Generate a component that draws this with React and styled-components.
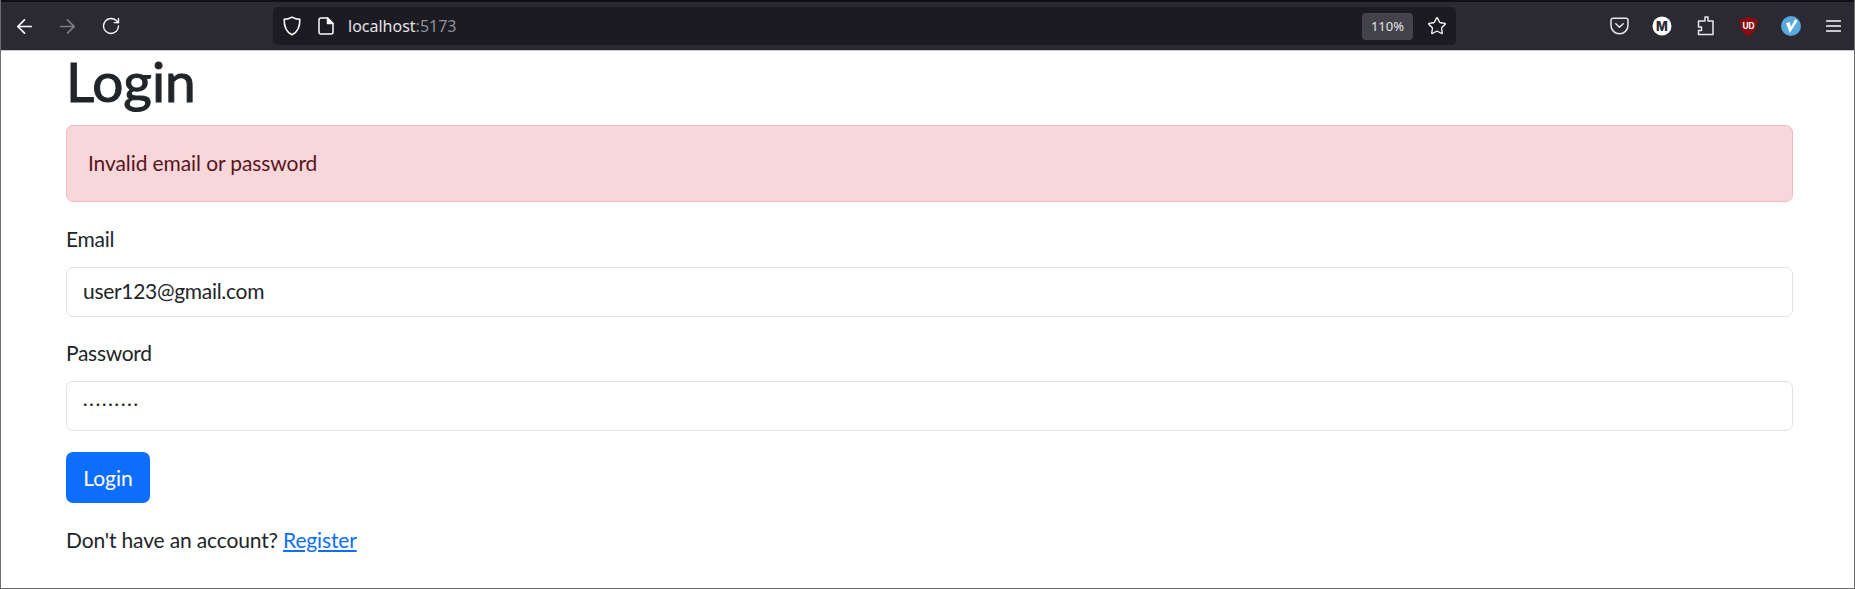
import styled, { createGlobalStyle } from "styled-components"
import { ArrowLeft, ArrowRight, RotateCw, Star } from "lucide-react"

const Global = createGlobalStyle`
  html, body { margin: 0; padding: 0; background: #fff; }
  body { font-family: "Lato", "Open Sans", sans-serif; overflow: hidden; }
  * { box-sizing: border-box; }
`

const Frame = styled.div`
  width: 1855px;
  height: 589px;
  border: 1px solid #6b6b6b;
  border-top: none;
  overflow: hidden;
`

const Toolbar = styled.div`
  height: 51px;
  background: #2b2a33;
  border-top: 2px solid #101014;
  border-bottom: 1px solid #c9c9cd;
  display: flex;
  align-items: center;
  padding: 0 9px 0 2px;
  color: #fbfbfe;
`

const NavButton = styled.div`
  width: 43px;
  height: 42px;
  display: flex;
  align-items: center;
  justify-content: center;
  opacity: ${p => (p.$dim ? 0.4 : 1)};
`

const UrlBar = styled.div`
  margin-left: 141px;
  width: 1183px;
  height: 38px;
  background: #1c1b22;
  border-radius: 5px;
  display: flex;
  align-items: center;
  padding: 0 9px 0 10px;
`

const UrlIcon = styled.div`
  width: 18px;
  height: 20px;
  margin-right: ${p => p.$gap}px;
  display: flex;
  align-items: center;
  justify-content: center;
`

const UrlText = styled.div`
  flex: 1;
  font-family: "Noto Sans", sans-serif;
  font-size: 16px;
  color: #e4e4e8;
  span { color: #8f8f9d; }
`

const ZoomBadge = styled.div`
  background: #44434c;
  border-radius: 4px;
  height: 27px;
  width: 51px;
  margin-right: 14px;
  font-family: "Noto Sans", sans-serif;
  font-size: 13px;
  color: #e4e4e8;
  display: flex;
  align-items: center;
  justify-content: center;
`

const Extensions = styled.div`
  margin-left: auto;
  display: flex;
  align-items: center;
  gap: 21px;
`

const ExtSlot = styled.div`
  width: 22px;
  height: 22px;
  display: flex;
  align-items: center;
  justify-content: center;
`

const Content = styled.div`
  padding: 0 61px 0 65px;
`

const Heading = styled.h1`
  margin: 0 0 14px;
  font-size: 55px;
  line-height: 60px;
  font-weight: 400;
  -webkit-text-stroke: 1px #212529;
  color: #212529;
`

const Alert = styled.div`
  height: 77px;
  background: #f8d7da;
  border: 1px solid #f5b9c0;
  border-radius: 7px;
  padding: 0 21px 2px;
  display: flex;
  align-items: center;
  font-size: 21px;
  letter-spacing: -0.1px;
  color: #58151c;
`

const Field = styled.div`
  margin-top: ${p => p.$top}px;
`

const Label = styled.label`
  display: block;
  font-size: 21px;
  line-height: 32px;
  letter-spacing: -0.3px;
  margin-bottom: 12px;
  color: #212529;
`

const Input = styled.div`
  height: 50px;
  border: 1.5px solid #dfe2e6;
  border-radius: 7px;
  padding: 0 16px 4px;
  display: flex;
  align-items: center;
  font-size: 21px;
  letter-spacing: -0.3px;
  color: #212529;
`

const PasswordDots = styled.span`
  font-size: 17px;
  letter-spacing: 1.9px;
  margin-top: -1px;
`

const SubmitButton = styled.button`
  display: block;
  margin-top: 21px;
  width: 84px;
  height: 51px;
  background: #0d6efd;
  border: none;
  border-radius: 7px;
  color: #fff;
  font-family: inherit;
  font-size: 21px;
`

const Footer = styled.p`
  margin: 21px 0 0;
  font-size: 21px;
  line-height: 32px;
  letter-spacing: -0.15px;
  color: #212529;
  a { color: #0d6efd; text-decoration: underline; }
`

const ShieldIcon = () => (
  <svg width="18" height="20" viewBox="0 0 18 20" fill="none" stroke="currentColor" strokeWidth="1.6" strokeLinejoin="round">
    <path d="M9 1.2 C11.5 2.8 14 3.4 16.8 3.4 C17 10 15 15.8 9 18.8 C3 15.8 1 10 1.2 3.4 C4 3.4 6.5 2.8 9 1.2 Z" />
  </svg>
)

const FileIcon = () => (
  <svg width="16" height="18" viewBox="0 0 16 18" fill="none" stroke="currentColor" strokeWidth="1.5" strokeLinejoin="round">
    <path d="M3 1 H9.5 L15 6.5 V15 A2 2 0 0 1 13 17 H3 A2 2 0 0 1 1 15 V3 A2 2 0 0 1 3 1 Z" />
    <path d="M9.5 1 V6.5 H15 Z" fill="currentColor" />
  </svg>
)

const PocketIcon = () => (
  <svg width="19" height="18" viewBox="0 0 19 18" fill="none" stroke="#e8e8ec" strokeWidth="1.5" strokeLinecap="round" strokeLinejoin="round">
    <path d="M3 1.2 H16 A2 2 0 0 1 18 3.2 V8.5 A8.5 8.3 0 0 1 1 8.5 V3.2 A2 2 0 0 1 3 1.2 Z" />
    <path d="M5.8 6.8 L9.5 10.2 L13.2 6.8" />
  </svg>
)

const AccountIcon = () => (
  <svg width="20" height="20" viewBox="0 0 20 20">
    <circle cx="10" cy="10" r="9.5" fill="#fff" />
    <text x="10" y="14.5" textAnchor="middle" fontSize="12.5" fontWeight="800" fontFamily="Inter, sans-serif" fill="#2b2a33">M</text>
  </svg>
)

const PuzzleIcon = () => (
  <svg width="17" height="20" viewBox="0 0 17 20" fill="none" stroke="#e8e8ec" strokeWidth="1.5" strokeLinejoin="round">
    <path d="M8 1 H11 V5 H16 V18.5 H1.5 V14.5 H4.5 V11 H1.5 V5 H8 Z" />
  </svg>
)

const UblockIcon = () => (
  <svg width="19" height="21" viewBox="0 0 18 20">
    <path d="M9 .5 C11.5 2 14 2.6 17.5 3 C17.7 10 15.5 16 9 19.5 C2.5 16 .3 10 .5 3 C4 2.6 6.5 2 9 .5 Z" fill="#8a0c0c" />
    <text x="9" y="12.5" textAnchor="middle" fontSize="8" fontWeight="700" fontFamily="Inter, sans-serif" fill="#fff">UD</text>
  </svg>
)

const PennantIcon = () => (
  <svg width="20" height="20" viewBox="0 0 20 20">
    <circle cx="10" cy="10" r="10" fill="#58a8de" />
    <path d="M5 7.2 L8.8 6 L9.8 11 L14.2 3.2 L16.6 5 L8.8 17 Z" fill="#fff" />
  </svg>
)

const BurgerIcon = () => (
  <svg width="16" height="14" viewBox="0 0 16 14" fill="#c8c8cc">
    <rect y="1" width="15" height="2" rx=".5" />
    <rect y="6" width="15" height="2" rx=".5" />
    <rect y="11" width="15" height="2" rx=".5" />
  </svg>
)

const App = () => (
  <Frame>
    <Global />
    <Toolbar>
      <NavButton><ArrowLeft size={23} strokeWidth={1.8} /></NavButton>
      <NavButton $dim><ArrowRight size={23} strokeWidth={1.8} /></NavButton>
      <NavButton><RotateCw size={20} strokeWidth={1.6} /></NavButton>
      <UrlBar>
        <UrlIcon $gap={16}><ShieldIcon /></UrlIcon>
        <UrlIcon $gap={13}><FileIcon /></UrlIcon>
        <UrlText>localhost<span>:5173</span></UrlText>
        <ZoomBadge>110%</ZoomBadge>
        <Star size={20} strokeWidth={1.6} />
      </UrlBar>
      <Extensions>
        <ExtSlot><PocketIcon /></ExtSlot>
        <ExtSlot><AccountIcon /></ExtSlot>
        <ExtSlot><PuzzleIcon /></ExtSlot>
        <ExtSlot><UblockIcon /></ExtSlot>
        <ExtSlot><PennantIcon /></ExtSlot>
        <ExtSlot><BurgerIcon /></ExtSlot>
      </Extensions>
    </Toolbar>
    <Content>
      <Heading>Login</Heading>
      <Alert>Invalid email or password</Alert>
      <Field $top={21}>
        <Label>Email</Label>
        <Input>user123@gmail.com</Input>
      </Field>
      <Field $top={20}>
        <Label>Password</Label>
        <Input><PasswordDots>·········</PasswordDots></Input>
      </Field>
      <SubmitButton>Login</SubmitButton>
      <Footer>Don't have an account? <a href="#register">Register</a></Footer>
    </Content>
  </Frame>
)

export default App
